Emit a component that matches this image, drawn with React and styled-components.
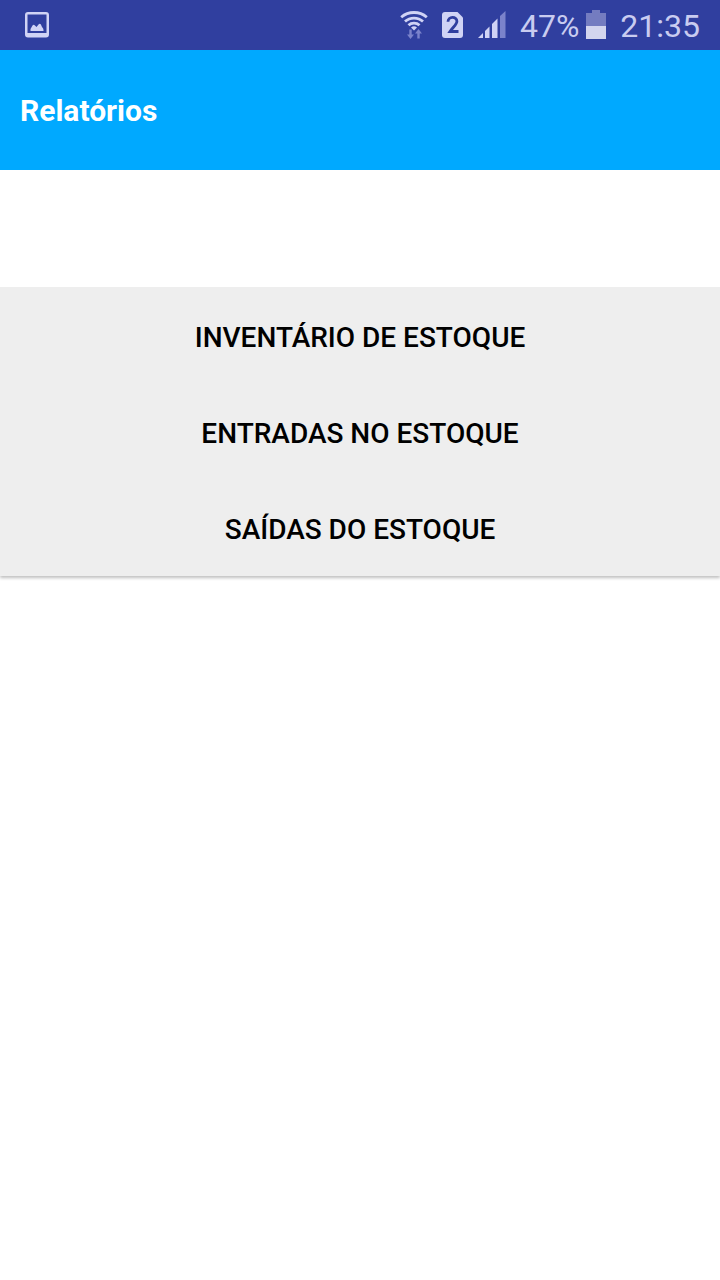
import React from 'react';
import styled, { createGlobalStyle } from 'styled-components';

const reports = [
	'INVENTÁRIO DE ESTOQUE',
	'ENTRADAS NO ESTOQUE',
	'SAÍDAS DO ESTOQUE',
];

const PictureIcon = () => (
	<svg width="26" height="28" viewBox="0 0 26 28" aria-hidden="true">
		<path
			fill="#d0d3f5"
			fillRule="evenodd"
			d="M4 1h18a3 3 0 0 1 3 3v19.500a3 3 0 0 1-3 3H4a3 3 0 0 1-3-3V4a3 3 0 0 1 3-3zM3.500 3.500v18.500h19V3.500z"
		/>
		<path
			fill="#d0d3f5"
			d="M6.500 20v-2l2-3.500q1.200-1.500 2.400 0l1.600 1.500 2-2.500q1.200-1.500 2.400 0l1.100 2.500q1.500 1.500 1.500 3v1z"
		/>
	</svg>
);

const WifiIcon = () => (
	<svg width="28" height="30" viewBox="0 0 28 30" aria-hidden="true">
		<g fill="none" stroke="#d0d3f5" strokeWidth="2.800">
			<path d="M1.200 7.200C8.500 .9 19.500 .9 26.800 7.200" />
			<path d="M5 11.500C10 6.900 18 6.900 23 11.500" />
			<path d="M8.500 15.300C11.500 12.500 16.500 12.500 19.500 15.300" />
		</g>
		<path fill="#d0d3f5" d="M11 17.500q3-2.400 6 0L14 20.500z" />
		<g fill="#7b83cb">
			<path d="M9.300 19.500h2.400v5h2.300l-3.500 4.500L7 24.500h2.300z" />
			<path d="M17.300 28.500h2.400v-5H22L18.500 19 15 23.500h2.300z" />
		</g>
	</svg>
);

const SimIcon = () => (
	<svg width="22" height="28" viewBox="0 0 22 28" aria-hidden="true">
		<path
			fill="#d0d3f5"
			d="M3 1h12.500L21 6.500V24a3 3 0 0 1-3 3H3a3 3 0 0 1-3-3V4a3 3 0 0 1 3-3z"
		/>
		<path
			fill="none"
			stroke="#303f9f"
			strokeWidth="2.800"
			d="M6 10.800C6 5 14.900 5 14.900 10.200C14.900 13.300 11.300 15.800 8 20.500H16.500"
		/>
	</svg>
);

const SignalIcon = () => (
	<svg width="28" height="28" viewBox="0 0 28 28" aria-hidden="true">
		<g fill="#d0d3f5">
			<path d="M0 27l5-5v5z" />
			<path d="M7 20l4.500-4.500V27H7z" />
			<path d="M14 13L19.500 7.500V27H14z" />
		</g>
		<path fill="#7b83cb" d="M22 5l5.500-5v27H22z" />
	</svg>
);

const BatteryIcon = () => (
	<svg width="20" height="30" viewBox="0 0 20 30" aria-hidden="true">
		<path fill="#747cc0" d="M6 0h8v3h6v14H0V3h6z" />
		<path fill="#d3d5ee" d="M0 16h20v13H0z" />
	</svg>
);

const App = () => {
	return (
		<Page>
			<GlobalStyle />
			<StatusBar>
				<PictureIcon />
				<StatusGroup>
					<WifiIcon />
					<SimIcon />
					<SignalIcon />
					<Battery>
						<StatusText>47%</StatusText>
						<BatteryIcon />
					</Battery>
					<StatusText as="time">21:35</StatusText>
				</StatusGroup>
			</StatusBar>
			<Header>
				<Title>Relatórios</Title>
			</Header>
			<Menu>
				{reports.map(report => (
					<MenuButton key={report} type="button">{report}</MenuButton>
				))}
			</Menu>
		</Page>
	)
}

const GlobalStyle = createGlobalStyle`
	body {
		margin: 0;
		background: #fff;
		font-family: Roboto, sans-serif;
	}
`;

const Page = styled.div`
	min-height: 100vh;
	background: #fff;
`;

const StatusBar = styled.div`
	display: flex;
	align-items: center;
	justify-content: space-between;
	box-sizing: border-box;
	height: 50px;
	padding: 0 20px 0 24px;
	background: #303f9f;
	color: #c9ccf0;
	svg {
		display: block;
		flex: none;
	}
`;

const StatusGroup = styled.div`
	display: flex;
	align-items: center;
	gap: 14px;
`;

const Battery = styled.div`
	display: flex;
	align-items: center;
	gap: 7px;
`;

const StatusText = styled.span`
	padding-top: 2px;
	font-size: 32px;
	font-weight: 400;
	line-height: 40px;
`;

const Header = styled.header`
	display: flex;
	align-items: center;
	box-sizing: border-box;
	height: 120px;
	padding: 2px 20px 0;
	background: #00a9ff;
`;

const Title = styled.h1`
	margin: 0;
	color: #fff;
	font-size: 30px;
	font-weight: 700;
	line-height: 40px;
`;

const Menu = styled.main`
	display: flex;
	flex-direction: column;
	margin-top: 117px;
	border-top: 1px solid #eee;
	background: #eee;
	box-shadow: 0 2px 3px rgba(0, 0, 0, 0.25);
	clip-path: inset(0 0 -8px 0);
`;

const MenuButton = styled.button`
	height: 96px;
	padding: 4px 16px 0;
	border: 0;
	background: transparent;
	color: #000;
	font-family: inherit;
	font-size: 28px;
	font-weight: 500;
	line-height: 40px;
	cursor: pointer;
`;

export default App
